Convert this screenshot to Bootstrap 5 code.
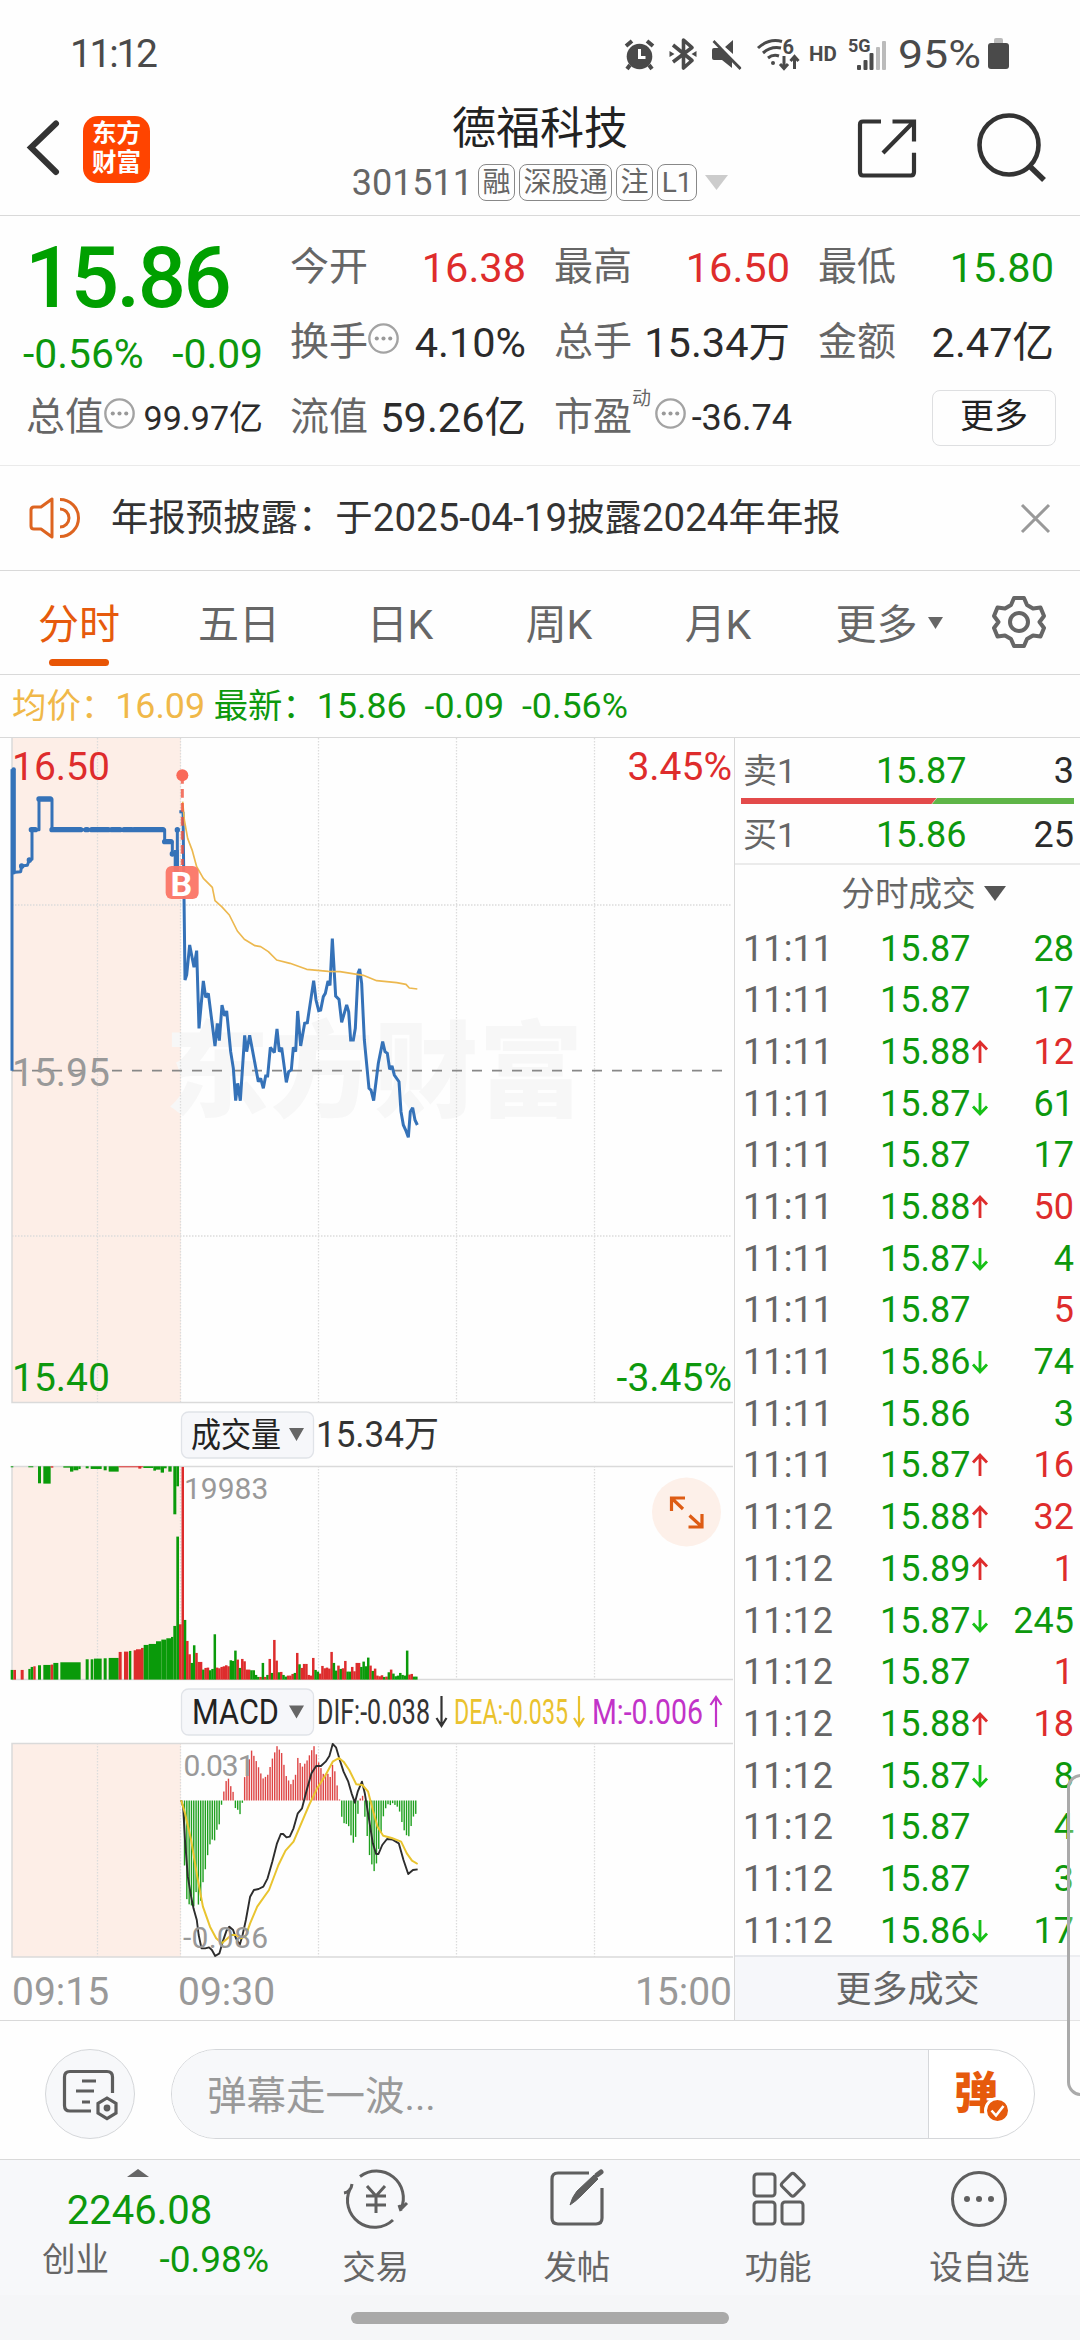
<!DOCTYPE html>
<html lang="zh-CN">
<head>
<meta charset="utf-8">
<meta name="viewport" content="width=device-width, initial-scale=1">
<title>德福科技 301511</title>
<link href="https://cdn.jsdelivr.net/npm/bootstrap@5.3.0/dist/css/bootstrap.min.css" rel="stylesheet">
<style>
  :root { --up:#de2c2c; --down:#0d980d; --ink:#2b2b2b; --soft:#666; --pale:#999; --brand:#e65a0c; --rule:#d9d9d9; --wash:#f7f8fa; }
  html, body { overflow:hidden; }
  body { width:1080px; height:2340px; background:#fefefe; color:var(--ink); font-family:Roboto,"Noto Sans CJK SC",sans-serif; line-height:1; }
  svg { display:block; overflow:visible; }
  svg text { font-family:Roboto,"Noto Sans CJK SC",sans-serif; }
  .up { color:var(--up); } .down { color:var(--down); } .soft { color:var(--soft); } .pale { color:var(--pale); }
  .statusbar { height:100px; padding:34px 65px 0 72px; color:#4a4a4a; }
  .clock { font-size:39px; line-height:40px; letter-spacing:-2.3px; margin-left:-2px; }
  .titlebar { height:116px; border-bottom:1px solid var(--rule); }
  .side-tools { width:300px; }
  .app-logo { width:67px; height:67px; border-radius:15px; background:#ff4400; color:#fff; font-weight:700; font-size:24.5px; line-height:28.5px; margin-left:24px; }
  .stock-name { font-size:44px; line-height:52px; color:#222; margin-top:3px; }
  .stock-code { font-size:36px; margin-right:5px; }
  .tag-box { font-size:28px; line-height:35px; height:37px; border:1px solid #888; border-radius:8px; padding:0 3.3px; margin-right:4.5px; }
  .quote { height:250px; border-bottom:1px solid #eaeaea; padding:14px 25px 0 26px; }
  .quote-main { width:237px; margin-right:27px; }
  .big-price { font-size:85px; font-weight:500; line-height:88px; height:92px; padding-top:4px; color:#00a000; letter-spacing:-2.5px; margin-left:-1px; }
  .change-line { font-size:40.8px; height:58px; line-height:64px; margin-left:-3px; }
  .quote-grid { gap:0 28px; display:grid; grid-template-columns:236px 236px 236px; grid-auto-rows:75px; }
  .cell { height:75px; font-size:41.5px; }
  .cell .soft { font-size:39px; white-space:nowrap; }
  .cell .small-num { margin-right:-2px; }
  .more-btn { width:124px; height:56px; border:1px solid #dedfe1; border-radius:8px; font-size:34px; color:#222; margin-right:-2px; padding-bottom:3px; }
  .notice { height:105px; border-bottom:1px solid var(--rule); padding:0 30px 0 29px; font-size:37.4px; color:#333; }
  .notice .num { font-size:38.5px; }
  .tabs { height:104px; border-bottom:1px solid var(--rule); font-size:41px; color:var(--soft); }
  .tabs .tab { height:103px; position:relative; padding-top:5px; }
  .tab.on { color:var(--brand); }
  .tab.on::after { content:""; position:absolute; bottom:8px; left:49px; width:60px; height:7px; border-radius:4px; background:#e85505; }
  .legend { height:63px; border-bottom:1px solid var(--rule); font-size:34.4px; padding-left:12px; white-space:pre; color:var(--down); padding-top:1px; }
  .legend .num { font-size:35.8px; }
  .legend .avg { color:#f0b849; }
  .board { height:1283px; border-bottom:1px solid var(--rule); }
  .charts { width:734px; }
  .depth { width:346px; border-left:1px solid var(--rule); }
  .quote-line { height:51.7px; font-size:36px; padding:2px 6px 0 8px; }
  .quote-line .t { width:137px; letter-spacing:.1px; }
  .quote-line .p { width:87px; margin-right:5px; }
  .best { height:60px; font-size:36px; padding:3px 6px 0 8px; }
  .best .t { width:133px; font-size:34px; }
  .trades-title { height:59px; font-size:33.6px; border-top:2px solid #ebebeb; padding:3px 0 0 32px; }
  .more-trades { height:65px; background:#f6f7fa; border-top:2px solid #e5e7eb; font-size:36px; padding-top:2px; }
  .composer { height:139px; border-bottom:1px solid var(--rule); padding:7px 45px 0 45px; }
  .round-btn { width:90px; height:90px; border:1.5px solid #d5d7da; border-radius:50%; background:var(--wash); }
  .danmu { width:864px; height:90px; border:1.5px solid #d5d7da; border-radius:45px; background:#fff; overflow:hidden; }
  .danmu-field { width:757px; background:var(--wash); border-right:1.5px solid #d5d7da; padding-left:35px; padding-top:7px; font-size:39.5px; color:var(--pale); }
  .dock { height:135px; background:var(--wash); color:var(--soft); font-size:33.5px; }
  .dock-index { width:275px; }
  .dock-item { width:201.3px; padding-top:9px; }
  .dock-label { margin-top:22px; }
  .gesture { height:45px; background:#f5f6f8; padding-top:17px; }
  .gesture-bar { width:378px; height:12px; border-radius:6px; background:#a9a9a9; }
  .edge-panel { position:absolute; left:1067px; top:1774px; width:30px; height:322px; border:3px solid #aaa; border-radius:14px; background:rgba(255,255,255,.3); }
</style>
<script src="https://cdn.jsdelivr.net/npm/bootstrap@5.3.0/dist/js/bootstrap.bundle.min.js"></script>
</head>
<body class="position-relative d-flex flex-column">

<svg width="0" height="0" class="position-absolute">
  <symbol id="dots" viewBox="0 0 30 30"><circle cx="15" cy="15" r="13.7" fill="none" stroke="#a3a3a3" stroke-width="2.3"/><g fill="#999"><circle cx="8.5" cy="15" r="2"/><circle cx="15" cy="15" r="2"/><circle cx="21.500" cy="15" r="2"/></g></symbol>
</svg>

<div class="statusbar d-flex justify-content-between">
  <div class="clock">11:12</div>
  <svg width="395" height="40" viewBox="620 34 395 40" fill="#4a4a4a">
    <circle cx="639.500" cy="56.500" r="12.800"/><path d="M626 46l6-5M653 46l-6-5M630 65l-3 4M649 65l3 4" stroke="#4a4a4a" stroke-width="4"/><path d="M639.500 49v8.500h6" stroke="#fff" stroke-width="3" fill="none"/>
    <path d="M673 45l19 15.500L683.500 68V40L692 47.500 673 62" fill="none" stroke="#4a4a4a" stroke-width="3.600" stroke-linejoin="round"/><path d="M669.500 51l5 3-5 3zM696.500 51l-5 3 5 3z"/>
    <path d="M712 50q0-2 2-2h7l20 19v1.500h-1L732 61v7l-10-8h-8q-2 0-2-2zM725 47l8-7v14z"/><path d="M713 40.500l27.500 28.500" stroke="#fefefe" stroke-width="2" transform="translate(3,-1)"/><path d="M713.500 41L740.500 69" stroke="#4a4a4a" stroke-width="2.600"/>
    <g fill="none" stroke="#4a4a4a" stroke-width="3"><path d="M758 48q11-10 24-6.500M763 53q8-7 18-5M768 58q5-4 11-2"/><path d="M784 56v12m-4-4l4 4.500 4-4.500M794.500 69V57m-4 4l4-4.500 4 4.500"/></g><circle cx="773" cy="63" r="2"/>
    <text x="782.500" y="53.500" font-size="20" font-weight="700">6</text>
    <text x="809" y="61" font-size="20.500" font-weight="700">HD</text>
    <text x="848" y="51.500" font-size="18" font-weight="700">5G</text>
    <rect x="857" y="65" width="4" height="5" rx="1"/><rect x="863.500" y="60" width="4" height="10" rx="1"/><rect x="869.500" y="53" width="4" height="17" rx="1"/><g fill="#bbb"><rect x="876" y="47" width="4" height="23" rx="1"/><rect x="882" y="41" width="4" height="29" rx="1"/></g>
    <text x="898" y="68" font-size="39.500" textLength="83" lengthAdjust="spacingAndGlyphs">95%</text>
    <rect x="994" y="38" width="9" height="8" rx="2" fill="#bbb"/><rect x="988" y="43" width="21" height="26" rx="3"/>
  </svg>
</div>

<div class="titlebar d-flex justify-content-between">
  <div class="side-tools d-flex pt-3" style="padding-left:27px">
    <svg width="32" height="64" viewBox="27 117 32 64"><path d="M56 124.500L31 148.500 56 173" fill="none" stroke="#333" stroke-width="6" stroke-linecap="round"/></svg>
    <div class="app-logo text-center pt-1">东方<br>财富</div>
  </div>
  <div class="d-flex flex-column align-items-center">
    <div class="stock-name">德福科技</div>
    <div class="d-flex align-items-center soft" style="margin-top:9px">
      <span class="stock-code">301511</span><span class="tag-box">融</span><span class="tag-box">深股通</span><span class="tag-box">注</span><span class="tag-box">L1</span>
      <svg width="23" height="15" class="ms-1"><path d="M0 0h23L11.500 15z" fill="#ccc"/></svg>
    </div>
  </div>
  <div class="side-tools d-flex justify-content-end pt-2">
    <svg width="270" height="80" viewBox="810 108 270 80" fill="none" stroke="#333" stroke-width="4.200"><path d="M881 121.500H863q-3 0-3 3V172q0 3.500 3 3.500h48q3 0 3-3.500V152.700M892.500 121.500H914V141.500M883 153l30-30.500" stroke-linejoin="miter"/><circle cx="1009" cy="145" r="29.500" stroke-width="4.600"/><path d="M1029 165.500L1044 180" stroke-width="5.500"/></svg>
  </div>
</div>

<div class="quote d-flex">
  <div class="quote-main">
    <div class="big-price">15.86</div>
    <div class="change-line d-flex justify-content-between down"><span>-0.56%</span><span>-0.09</span></div>
    <div class="cell d-flex align-items-center"><span class="soft">总值</span><svg width="31" height="31" class="mb-2 ms-0"><use href="#dots"/></svg><span class="ms-auto" style="font-size:34px">99.97亿</span></div>
  </div>
  <div class="quote-grid">
    <div class="cell d-flex align-items-center justify-content-between"><span class="soft">今开</span><span class="up">16.38</span></div>
    <div class="cell d-flex align-items-center justify-content-between"><span class="soft">最高</span><span class="up">16.50</span></div>
    <div class="cell d-flex align-items-center justify-content-between"><span class="soft">最低</span><span class="down">15.80</span></div>
    <div class="cell d-flex align-items-center"><span class="soft">换手</span><svg width="31" height="31" class="mb-2"><use href="#dots"/></svg><span class="ms-auto">4.10%</span></div>
    <div class="cell d-flex align-items-center justify-content-between"><span class="soft">总手</span><span>15.34万</span></div>
    <div class="cell d-flex align-items-center justify-content-between"><span class="soft">金额</span><span>2.47亿</span></div>
    <div class="cell d-flex align-items-center justify-content-between"><span class="soft">流值</span><span>59.26亿</span></div>
    <div class="cell d-flex align-items-center"><span class="soft">市盈</span><span class="soft" style="font-size:19px;margin-bottom:38px">动</span><svg width="31" height="31" class="mb-2 ms-1 flex-shrink-0"><use href="#dots"/></svg><span class="ms-auto small-num" style="font-size:36px">-36.74</span></div>
    <div class="cell d-flex align-items-center justify-content-end"><span class="more-btn d-flex align-items-center justify-content-center">更多</span></div>
  </div>
</div>

<div class="notice d-flex align-items-center">
  <svg width="52" height="44" viewBox="29 495 52 44" fill="none" stroke="#dd6420" stroke-width="3"><path d="M52 498v38L41 528H34q-3 0-3-3V509q0-3 3-3h7z" stroke-linejoin="round"/><path d="M60 498.500a18.500 18.500 0 0 1 0 37M60 508a9 9 0 0 1 0 18"/></svg>
  <span style="margin-left:30px">年报预披露：于<span class="num">2025-04-19</span>披露<span class="num">2024</span>年年报</span>
  <svg width="29" height="29" class="ms-auto"><path d="M1 1l27 27M28 1L1 28" stroke="#999" stroke-width="3"/></svg>
</div>

<div class="tabs d-flex">
  <div class="tab on d-flex align-items-center justify-content-center" style="width:158px">分时</div>
  <div class="tab d-flex align-items-center justify-content-center" style="width:162px">五日</div>
  <div class="tab d-flex align-items-center justify-content-center" style="width:160px">日K</div>
  <div class="tab d-flex align-items-center justify-content-center" style="width:158px">周K</div>
  <div class="tab d-flex align-items-center justify-content-center" style="width:160px">月K</div>
  <div class="tab d-flex align-items-center justify-content-center" style="width:182px">更多<svg width="15" height="12" style="margin-left:10px;margin-bottom:5px"><path d="M0 0h15L7.500 12z" fill="#666"/></svg></div>
  <svg width="56" height="56" viewBox="-28 -28 56 56" fill="none" stroke="#666" stroke-width="4" style="margin:23px 0 0 11px"><path d="M-5-24H5L8-17 14-13.500 21.500-14.500 25-6 20.500 0 25 6 21.500 14.500 14 13.500 8 17 5 24H-5L-8 17-14 13.500-21.500 14.500-25 6-20.500 0-25-6-21.500-14.500-14-13.500-8-17z" stroke-linejoin="round"/><circle r="9"/></svg>
</div>

<div class="legend d-flex align-items-center"><span class="avg">均价：<span class="num">16.09</span> </span><span>最新：<span class="num">15.86  -0.09  -0.56%</span></span></div>

<div class="board d-flex">
  <div class="charts">
    <svg id="chart" width="734" height="1282" viewBox="0 738 734 1282">
      <g fill="#fdeee7"><rect x="12" y="738" width="169" height="664"/><rect x="12" y="1466" width="169" height="213"/><rect x="12" y="1743" width="169" height="214"/></g>
      <text x="165" y="1109" font-size="104" font-weight="900" fill="#f7f7f7" textLength="418">东方财富</text>
      <g stroke="#dcdcdc" stroke-width="1.300" stroke-dasharray="1.500 1.500"><path d="M97.500 738v664M180.500 738v664M318.500 738v664M456.500 738v664M594.500 738v664M12 905H732M12 1236H732M97.500 1466v213M180.500 1466v213M318.500 1466v213M456.500 1466v213M594.500 1466v213M97.500 1743v214M180.500 1743v214M318.500 1743v214M456.500 1743v214M594.500 1743v214"/></g>
      <g stroke="#dadada" stroke-width="1.500" fill="none"><path d="M12 738V1402.500H733M12 1679.500V1466.500H733M12 1679.500H733M733 1743.500H12V1957H733"/></g>
      <path d="M12 1070.700H732" stroke="#888" stroke-width="1.800" stroke-dasharray="10 10"/>
      <g transform="translate(0,730) scale(.33333)" fill="none" stroke="#3572b8" stroke-linejoin="round">
        <path stroke-width="9" d="M36 1022V118"/><path stroke-width="13" stroke-linecap="round" d="M41 118V427"/>
        <path stroke-width="9" d="M45 427L62 425 65 408 82 406 88 390 96 388V299H117V207H156V299H494V335H517V371H526V427H532V299M538 245H548"/>
        <path stroke-width="16" stroke-linecap="round" d="M94 299H106M117 207H151M156 299H242M258 299H262M275 299H325M335 299H360M372 299H395M402 299H489M494 335H513M517 371V372M532 299V300M65 408V409M88 390V391"/><path stroke-width="15" d="M529 360V420"/>
        <path stroke-width="9" stroke-linejoin="miter" stroke-miterlimit="2" d="M549 245L555 750 560 735 569 645 582 712 590 662 597 895 610 753 617 802 625 790 645 948 652 880 658 932 666 825 674 858 680 843 692 965 700 1015 707 1112 713 1060 721 1112 734 916 740 965 749 916 775 1055 782 1045 790 1075 797 1038 803 1038 811 952 823 968 831 897 838 965 845 953 859 1057 866 1025 874 1020 880 952 887 965 893 843 902 948 914 880 922 878 941 752 948 810 956 842 962 840 970 800 976 790 984 753 990 766 997 626 1007 798 1017 808 1025 877 1040 825 1046 845 1052 930 1060 930 1066 895 1074 730 1079 717 1085 760 1093 930 1107 1075 1113 1080 1121 1112 1135 1000 1148 935 1155 965 1162 970 1169 1018 1176 1008 1183 1035 1197 1055 1203 1145 1210 1185 1217 1200 1225 1222 1231 1145 1238 1133 1245 1170 1252 1185"/>
        <path stroke="#ecb84f" stroke-width="5" d="M548 215L553 270 563 325 577 362 590 410 610 445 637 472 645 512 665 530 688 555 712 603 733 628 765 647 782 650 805 665 830 690 870 700 920 718 985 724 1020 725 1090 736 1130 752 1190 758 1218 763 1228 774 1252 777"/>
        <path stroke="#f0523f" stroke-opacity=".8" stroke-width="9" stroke-dasharray="26 16" d="M547 135V405"/>
        <circle cx="547" cy="136" r="18" fill="#f96a59" stroke="none"/><rect x="497" y="408" width="99" height="99" rx="18" fill="#fb7566" fill-opacity=".95" stroke="none"/>
      </g>
      <text x="170.500" y="895.500" font-size="34" font-weight="700" fill="#fff">B</text>
      <g font-size="39">
        <text x="12" y="780" fill="#de2c2c">16.50</text><text x="12" y="1086" fill="#999">15.95</text><text x="12" y="1391" fill="#0d980d">15.40</text>
        <text x="732" y="780" fill="#de2c2c" text-anchor="end">3.45%</text><text x="732" y="1391" fill="#0d980d" text-anchor="end">-3.45%</text>
        <g fill="#999"><text x="12" y="2005">09:15</text><text x="178" y="2005">09:30</text><text x="732" y="2005" text-anchor="end">15:00</text></g>
      </g>
      <g fill="#f6f7fa" stroke="#e0e3e8" stroke-width="1.300"><rect x="181.500" y="1412" width="132" height="46" rx="7"/><rect x="181.500" y="1689" width="132" height="46" rx="7"/></g>
      <g fill="#666"><path d="M289 1428h15l-7.500 13zM289 1705.500h15l-7.500 13z"/></g>
      <g fill="#222" font-size="34"><text x="191" y="1447" textLength="90" lengthAdjust="spacingAndGlyphs">成交量</text><text x="192" y="1724" font-size="35" textLength="87" lengthAdjust="spacingAndGlyphs">MACD</text></g>
      <text x="316" y="1447" font-size="36" fill="#333" textLength="123" lengthAdjust="spacingAndGlyphs">15.34万</text>
      <g font-size="35"><text x="317" y="1724" fill="#333" textLength="113" lengthAdjust="spacingAndGlyphs">DIF:-0.038</text><text x="454" y="1724" fill="#eac22e" textLength="114" lengthAdjust="spacingAndGlyphs">DEA:-0.035</text><text x="592" y="1724" fill="#c233c8" textLength="111" lengthAdjust="spacingAndGlyphs">M:-0.006</text></g>
      <g fill="none" stroke-width="2.200"><path stroke="#333" d="M441.500 1696v30m-5-8l5 8 5-8"/><path stroke="#eac22e" d="M579 1696v30m-5-8l5 8 5-8"/><path stroke="#c233c8" d="M716 1727v-30m-5.500 8l5.500-8 5.500 8"/></g>
      <g id="volume"></g>
      <g id="hist"></g>
      <g transform="translate(0,1690) scale(.47192,.33333)" fill="none" stroke-linejoin="round">
        <path vector-effect="non-scaling-stroke" stroke="#2d2d2d" stroke-width="1.900" d="M384 331L388 350 392 450 398 560 405 620 410 655 417 690 421 735 427 775 435 775 443 772 449 780 456 798 465 790 472 755 480 722 486 710 494 720 500 745 508 765 514 735 521 690 530 620 538 600 548 597 558 590 567 565 577 515 587 460 595 432 600 432 607 442 614 440 622 415 631 370 640 355 650 300 660 250 670 228 680 228 690 215 698 198 705 162 712 172 720 210 728 245 738 275 745 310 752 338 758 305 767 275 773 310 780 370 790 460 797 492 802 492 810 465 820 447 832 449 845 460 855 510 865 552 875 540 885 538"/>
        <path vector-effect="non-scaling-stroke" stroke="#e9c42f" stroke-width="2" d="M384 331L392 370 405 450 418 560 430 650 445 710 458 745 470 760 480 748 490 735 500 735 510 745 520 740 530 700 545 650 570 600 590 525 605 482 622 455 640 395 655 345 672 295 690 255 705 215 718 204 728 215 740 240 755 283 768 285 780 305 790 360 800 410 812 437 830 444 850 455 862 490 873 512 885 522"/>
      </g>
      <g font-size="30" fill="#999"><text x="184" y="1499">19983</text><text x="183.500" y="1776" textLength="71">0.031</text><text x="183" y="1948" textLength="85">-0.086</text></g>
      <circle cx="686.500" cy="1512" r="34.500" fill="#fdf0e9"/>
      <path d="M685 1498H671.500V1511M672 1498.500L683 1509M688.500 1527H702V1514M701.500 1526.500L689.500 1515.500" fill="none" stroke="#de5c14" stroke-width="3.200"/>
    </svg>
  </div>
  <div class="depth d-flex flex-column">
    <div class="best d-flex align-items-center" style="padding-top:7px"><span class="t soft">卖1</span><span class="down">15.87</span><span class="ms-auto">3</span></div>
    <svg width="333" height="6" style="margin-left:6px" class="flex-shrink-0"><path d="M0 0H195.500L190.500 6H0z" fill="#e34a4a"/><path d="M196 0H333V6H191z" fill="#5fb548"/></svg>
    <div class="best d-flex align-items-center"><span class="t soft">买1</span><span class="down">15.86</span><span class="ms-auto">25</span></div>
    <div class="trades-title d-flex align-items-center justify-content-center soft">分时成交<svg width="22" height="15" style="margin-left:8px;margin-bottom:3px"><path d="M0 0h22L11 15z" fill="#555"/></svg></div>
    <div id="trades"></div>
    <div class="more-trades mt-auto d-flex align-items-center justify-content-center soft">更多成交</div>
  </div>
</div>

<div class="composer d-flex align-items-center justify-content-between">
  <div class="round-btn d-flex align-items-center justify-content-center">
    <svg width="56" height="50" viewBox="63 2070 56 50" fill="none" stroke="#5d5d5d" stroke-width="3.200"><path d="M92 2112H71q-5.500 0-5.500-5.500v-28.500q0-5.500 5.500-5.500h37q5.500 0 5.500 5.500V2094" /><path d="M83 2082h14M77 2092h18M83 2103h8"/><path d="M108 2099l9 5.500v9.500l-9 5.500-9-5.500v-9.500z"/><circle cx="108" cy="2109" r="1.800"/></svg>
  </div>
  <div class="danmu d-flex">
    <div class="danmu-field d-flex align-items-center">弹幕走一波...</div>
    <svg width="105" height="87" viewBox="929 2050 105 87"><text x="954" y="2109" font-size="44" font-weight="900" fill="#e65a0c">弹</text><circle cx="997.500" cy="2110.500" r="12" fill="#e65a0c" stroke="#fff" stroke-width="3"/><path d="M991.500 2110.500l4.500 5 7.500-9.500" fill="none" stroke="#fff" stroke-width="2.600"/></svg>
  </div>
</div>

<div class="dock d-flex">
  <div class="dock-index">
    <svg width="275" height="20"><path d="M127 17h22L138 9z" fill="#666"/></svg>
    <div class="down text-center ps-1" style="font-size:40px;margin-top:11px;line-height:40px">2246.08</div>
    <div class="d-flex justify-content-between align-items-center" style="padding:9px 6px 0 42px;line-height:40px"><span>创业</span><span class="down" style="font-size:37px">-0.98%</span></div>
  </div>
  <div class="dock-item d-flex flex-column align-items-center">
    <svg width="66" height="60" viewBox="-33 -30 66 60" fill="none" stroke="#5f5f5f" stroke-width="3"><path d="M-16-22.500A27 27 0 0 1 25 10M25 10l6-6M25 12l-2-6M17 21A27 27 0 0 1-26-10M-32-6q7-1 8-9"/><path d="M-9-13L0-3 9-13M0-3V14M-10-3H10M-10 6H10"/></svg>
    <span class="dock-label">交易</span>
  </div>
  <div class="dock-item d-flex flex-column align-items-center">
    <svg width="60" height="60" viewBox="-30 -30 60 60" fill="none" stroke="#5f5f5f" stroke-width="3.200"><path d="M12-26H-19q-6 0-6 6V19q0 6 6 6H19q6 0 6-6V-11"/><path d="M-7 6Q-5-2 0-8L17-24l4 4L4-3Q-1 2-7 6z" fill="#5f5f5f" stroke-width="1"/><path d="M20-24l4-3" stroke-width="5" stroke-linecap="round"/></svg>
    <span class="dock-label">发帖</span>
  </div>
  <div class="dock-item d-flex flex-column align-items-center">
    <svg width="60" height="60" viewBox="-30 -30 60 60" fill="none" stroke="#5f5f5f" stroke-width="3"><rect x="-24" y="-25" width="21" height="22" rx="3"/><rect x="-24" y="3" width="21" height="22" rx="3"/><rect x="4" y="3" width="21" height="22" rx="3"/><rect x="6" y="-23" width="17.500" height="17.500" rx="2.500" transform="rotate(45 14.750 -14.250)"/></svg>
    <span class="dock-label">功能</span>
  </div>
  <div class="dock-item d-flex flex-column align-items-center">
    <svg width="60" height="60" viewBox="-30 -30 60 60" fill="none" stroke="#5f5f5f" stroke-width="3"><circle r="26.500"/><g fill="#5f5f5f" stroke="none"><circle cx="-12" r="3"/><circle r="3"/><circle cx="12" r="3"/></g></svg>
    <span class="dock-label">设自选</span>
  </div>
</div>
<div class="gesture d-flex justify-content-center"><div class="gesture-bar"></div></div>
<div class="edge-panel"></div>

<script>
  // Tick list: time, price, direction, volume, volume colour
  const ticks = `11:11 15.87 - 28 g|11:11 15.87 - 17 g|11:11 15.88 u 12 r|11:11 15.87 d 61 g|11:11 15.87 - 17 g|11:11 15.88 u 50 r|11:11 15.87 d 4 g|11:11 15.87 - 5 r|11:11 15.86 d 74 g|11:11 15.86 - 3 g|11:11 15.87 u 16 r|11:12 15.88 u 32 r|11:12 15.89 u 1 r|11:12 15.87 d 245 g|11:12 15.87 - 1 r|11:12 15.88 u 18 r|11:12 15.87 d 8 g|11:12 15.87 - 4 g|11:12 15.87 - 3 g|11:12 15.86 d 17 g`.split('|').map(s => s.split(' '));
  const arrows = {
    u: '<svg width="16" height="24"><path d="M8 23V2M1 9.500L8 2l7 7.500" fill="none" stroke="#de2c2c" stroke-width="2.800"/></svg>',
    d: '<svg width="16" height="24"><path d="M8 1V22M1 14.500L8 22l7-7.500" fill="none" stroke="#16c016" stroke-width="2.800"/></svg>', '-': '' };
  document.getElementById('trades').innerHTML = ticks.map(([t, p, a, v, c]) =>
    `<div class="quote-line d-flex align-items-center"><span class="t soft">${t}</span><span class="p down">${p}</span>${arrows[a]}<span class="ms-auto ${c === 'r' ? 'up' : 'down'}">${v}</span></div>`).join('');

  // Volume bars, in thirds of a pixel
  const G = '#0a9a0a', R = '#dd2c2c';
  const rect = (x, y, w, h, f) => `<rect x="${x.toFixed(2)}" y="${y.toFixed(2)}" width="${w.toFixed(2)}" height="${h.toFixed(2)}" fill="${f}"/>`;
  const base = 1679.6, top0 = 1466.3;
  let out = '';
  [[32,40,29,'G'],[40,48,29,'R'],[62,71,29,'R'],[85,92,32,'G'],[92,100,38,'G'],[100,107,40,'R'],[114,123,43,'G'],[130,152,44,'G'],[152,160,45,'R'],[160,175,50,'G'],[181,242,52,'G'],[257,266,61,'G'],[272,280,61,'G'],[282,305,63,'G'],[311,320,64,'G'],[326,356,65,'G'],[356,365,83,'R'],[372,385,84,'R'],[387,394,86,'G'],[401,408,88,'R'],[408,423,91,'R'],[423,431,95,'R'],[431,446,104,'G'],[446,468,107,'G'],[468,484,115,'G'],[484,499,120,'G'],[499,513,124,'G'],[513,520,128,'G'],[520,529,161,'G'],[529,537,429,'G'],[537,545,166,'R']]
    .forEach(([a, b, h, c]) => out += rect(a/3, base - h/3, (b-a)/3, h/3, c === 'G' ? G : R));
  [[32,40,3,'G'],[85,100,3,'G'],[114,123,51,'G'],[130,152,52,'G'],[152,160,4,'R'],[190,210,4,'G'],[210,220,16,'G'],[220,235,12,'G'],[235,242,8,'G'],[257,266,6,'G'],[272,305,8,'G'],[311,320,12,'G'],[326,356,16,'G'],[356,430,3,'R'],[415,424,7,'R'],[430,460,5,'G'],[460,468,13,'G'],[468,482,10,'G'],[482,492,19,'G'],[492,500,6,'G'],[505,515,16,'G'],[520,529,144,'G'],[529,537,60,'G']]
    .forEach(([a, b, h, c]) => out += rect(a/3, top0, (b-a)/3, h/3, c === 'G' ? G : R));
  'R638 G179 R116 R76 G50 G103 R80 R53 R53 G30 R35 R36 G28 G32 G136 R36 R34 R38 R40 R43 R40 G58 G56 G87 R60 G35 R62 R55 R30 R30 G28 G28 G14 G8 R8 G50 R8 G14 R62 G20 R119 R57 G22 R23 G14 G9 R12 R12 R17 G20 R80 G46 R35 R47 R47 R14 R12 R65 G29 G24 R18 R41 R34 R36 R33 R83 G50 G27 R42 G32 R34 R56 G24 G24 R38 R25 R50 R50 G38 G54 G40 G66 R42 G26 R33 R12 R10 R13 G8 R9 G22 R30 G18 G10 G12 G20 G14 G12 G87 R15 R17 G9 G9'
    .split(' ').forEach((s, i) => { const h = +s.slice(1)/3; out += rect((544.5 + 6.87*i)/3, base - h, 2.5, h, s[0] === 'G' ? G : R); });
  document.getElementById('volume').innerHTML = out;

  // MACD histogram: interpolate the outline at each minute
  const env = [[386,0],[391,-195],[396,-298],[401,-312],[411,-318],[416,-270],[421,-318],[426,-298],[431,-235],[436,-200],[441,-155],[446,-125],[451,-115],[455,-120],[460,-85],[465,-70],[470,-5],[474,25],[479,58],[484,66],[489,43],[495,22],[499,-25],[504,-28],[509,-42],[514,-3],[518,68],[523,95],[533,150],[543,118],[553,80],[558,65],[568,78],[577,125],[587,163],[597,142],[606,75],[616,48],[626,75],[631,128],[640,100],[650,118],[665,165],[675,115],[685,80],[695,80],[700,70],[706,118],[715,40],[719,8],[722,-40],[729,-68],[738,-72],[748,-128],[753,-118],[758,-45],[763,5],[768,18],[772,-35],[777,-92],[782,-158],[792,-215],[797,-195],[806,-115],[811,-55],[816,-28],[821,-10],[826,-15],[832,-8],[845,-22],[850,-55],[855,-85],[865,-115],[870,-85],[875,-50],[886,-32]];
  let hist = '';
  for (let x = 391; x <= 885.5; x += 4.9) {
    const k = env.findIndex(p => p[0] >= x), [x1, y1] = env[Math.max(k-1, 0)], [x2, y2] = env[k];
    const v = (x2 === x1 ? y2 : y1 + (y2-y1)*(x-x1)/(x2-x1))/3;
    hist += rect(x/2.119 - .7, v > 0 ? 1800.5 - v : 1800.5, 1.4, Math.abs(v), v > 0 ? '#de4444' : '#1fa01f');
  }
  document.getElementById('hist').innerHTML = hist;
</script>
</body>
</html>
